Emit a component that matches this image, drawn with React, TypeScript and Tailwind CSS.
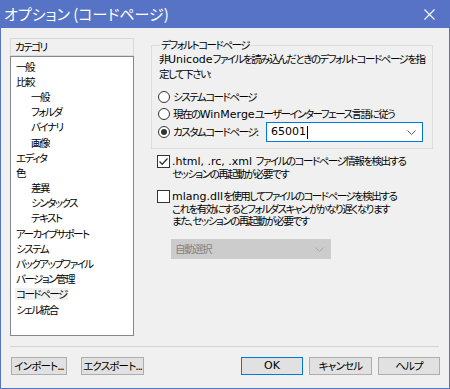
import React from 'react';

const categories = [
  { label: '一般', sub: false },
  { label: '比較', sub: false },
  { label: '一般', sub: true },
  { label: 'フォルダ', sub: true },
  { label: 'バイナリ', sub: true },
  { label: '画像', sub: true },
  { label: 'エディタ', sub: false },
  { label: '色', sub: false },
  { label: '差異', sub: true },
  { label: 'シンタックス', sub: true },
  { label: 'テキスト', sub: true },
  { label: 'アーカイブサポート', sub: false },
  { label: 'システム', sub: false },
  { label: 'バックアップファイル', sub: false },
  { label: 'バージョン管理', sub: false },
  { label: 'コードページ', sub: false, selected: true },
  { label: 'シェル統合', sub: false },
];

// Latin runs get a wider font so they sit like Meiryo UI next to the tight kana
function T({ s }: { s: string }) {
  const parts = s.split(/([A-Za-z0-9.,_ ]+)/);
  return (
    <>
      {parts.map((p, i) =>
        /^[A-Za-z0-9.,_ ]+$/.test(p) && /[A-Za-z0-9]/.test(p) ? (
          <span key={i} className="font-['DejaVu_Sans'] text-[11px] tracking-normal">
            {p}
          </span>
        ) : (
          <React.Fragment key={i}>{p}</React.Fragment>
        )
      )}
    </>
  );
}

function Radio({ checked }: { checked?: boolean }) {
  return (
    <span className="w-[12px] h-[12px] rounded-full border border-[#333333] bg-white flex items-center justify-center shrink-0">
      {checked && <span className="w-[6px] h-[6px] rounded-full bg-[#333333]" />}
    </span>
  );
}

function Checkbox({ checked }: { checked?: boolean }) {
  return (
    <span className="w-[13px] h-[13px] border border-[#333333] bg-white flex items-center justify-center shrink-0">
      {checked && (
        <svg width="11" height="11" viewBox="0 0 11 11">
          <path d="M1.5 5.5 L4.2 8.2 L9.5 2.5" fill="none" stroke="#333333" strokeWidth="1.3" />
        </svg>
      )}
    </span>
  );
}

function Chevron({ color }: { color: string }) {
  return (
    <svg width="9" height="5" viewBox="0 0 9 5">
      <path d="M0.5 0.5 L4.5 4.5 L8.5 0.5" fill="none" stroke={color} strokeWidth="1" />
    </svg>
  );
}

function Button({ label, width, primary }: { label: string; width: string; primary?: boolean }) {
  return (
    <div
      className={
        (primary ? 'border-[#0078d7] ' : 'border-[#adadad] ') +
        width +
        ' h-[18px] flex items-center justify-center bg-[#e1e1e1] border whitespace-nowrap leading-[12px] tracking-[-0.8px]'
      }
    >
      <T s={label} />
    </div>
  );
}

export default function App() {
  return (
    <div className="w-[450px] h-[389px] flex flex-col bg-[#f0f0f0] border-x border-b border-[#5673c6] text-black font-['Noto_Sans_CJK_JP','Noto_Sans',sans-serif] [font-feature-settings:'palt']">
      {/* title bar */}
      <div className="h-[28px] shrink-0 bg-[#5673c6] flex items-center justify-between pl-[3px] pr-[14px] text-white">
        <span className="text-[15px] leading-[16px] whitespace-nowrap">オプション (コードページ)</span>
        <svg width="11" height="11" viewBox="0 0 11 11">
          <path d="M0.5 0.5 L10.5 10.5 M10.5 0.5 L0.5 10.5" stroke="white" strokeWidth="1.1" />
        </svg>
      </div>

      <div className="flex-1 flex flex-col px-[9px] pt-[10px] text-[10.5px] tracking-[-1.5px]">
        <div className="flex">
          {/* categories */}
          <div className="w-[124px] flex flex-col shrink-0">
            <div className="h-[18px] border border-[#d9d9d9] bg-[#f0f0f0] flex items-center pl-[4px] leading-[12px]">
              カテゴリ
            </div>
            <div className="h-[280px] border border-[#828790] bg-white pt-[2px]">
              {categories.map((c, i) => (
                <div
                  key={i}
                  className={(c.sub ? 'pl-[20px]' : 'pl-[5px]') + ' h-[15.2px] flex items-center leading-[12px] whitespace-nowrap'}
                >
                  <span className={c.selected ? 'bg-[#f0f0f0] px-[1px] -ml-[1px]' : ''}>{c.label}</span>
                </div>
              ))}
            </div>
          </div>

          {/* right side */}
          <div className="ml-[17px] w-[282px] flex flex-col pt-[1px]">
            <fieldset className="border border-[#dcdcdc] pl-[6px] pb-[6px]">
              <legend className="ml-[2px] px-[1px] leading-[12px] whitespace-nowrap">デフォルトコードページ</legend>
              <div className="pl-[1px] leading-[14px] mt-px whitespace-nowrap">
                <div>
                  <T s="非Unicodeファイルを読み込んだときのデフォルトコードページを指" />
                </div>
                <div>定して下さい:</div>
              </div>
              <div className="mt-[8px] h-[16px] flex items-center gap-[3px] whitespace-nowrap">
                <Radio />
                <span className="leading-[12px]">システムコードページ</span>
              </div>
              <div className="mt-px h-[16px] flex items-center gap-[3px] whitespace-nowrap">
                <Radio />
                <span className="leading-[12px]">
                  <T s="現在のWinMergeユーザーインターフェース言語に従う" />
                </span>
              </div>
              <div className="h-[20px] flex items-center gap-[3px] whitespace-nowrap">
                <Radio checked />
                <span className="w-[90px] leading-[12px]">カスタムコードページ:</span>
                <div className="w-[157px] h-[20px] border border-[#0078d7] bg-white flex items-center justify-between pl-[4px] pr-[6px]">
                  <span className="leading-[12px] flex items-center">
                    <span className="font-['DejaVu_Sans'] text-[11px] tracking-normal">65001</span>
                    <span className="inline-block w-px h-[13px] bg-black ml-px" />
                  </span>
                  <Chevron color="#606060" />
                </div>
              </div>
            </fieldset>

            <div className="mt-[6px] pl-[6px] flex gap-[2px] whitespace-nowrap">
              <Checkbox checked />
              <div className="leading-[12px]">
                <div>
                  <T s=".html, .rc, .xml ファイルのコードページ情報を検出する" />
                </div>
                <div>セッションの再起動が必要です</div>
              </div>
            </div>

            <div className="mt-[10px] pl-[6px] flex gap-[2px] whitespace-nowrap">
              <Checkbox />
              <div className="leading-[12px]">
                <div>
                  <T s="mlang.dllを使用してファイルのコードページを検出する" />
                </div>
                <div>これを有効にするとフォルダスキャンがかなり遅くなります</div>
                <div>また、セッションの再起動が必要です</div>
              </div>
            </div>

            <div className="mt-[12px] ml-[20px] w-[160px] h-[20px] bg-[#cccccc] border border-[#cccccc] flex items-center justify-between pl-[3px] pr-[6px] text-[#838383]">
              <span className="leading-[12px]">自動選択</span>
              <Chevron color="#a8a8a8" />
            </div>
          </div>
        </div>

        <div className="mt-[10px] h-px w-[429px] bg-[#d4d4d4]" />

        <div className="mt-[10px] flex items-center ml-px w-[429px]">
          <Button label="インポート..." width="w-[56px]" />
          <div className="ml-[14px]">
            <Button label="エクスポート..." width="w-[63px]" />
          </div>
          <div className="ml-auto flex gap-[6px]">
            <Button label="OK" width="w-[62px]" primary />
            <Button label="キャンセル" width="w-[63px]" />
            <Button label="ヘルプ" width="w-[62px]" />
          </div>
        </div>
      </div>
    </div>
  );
}
